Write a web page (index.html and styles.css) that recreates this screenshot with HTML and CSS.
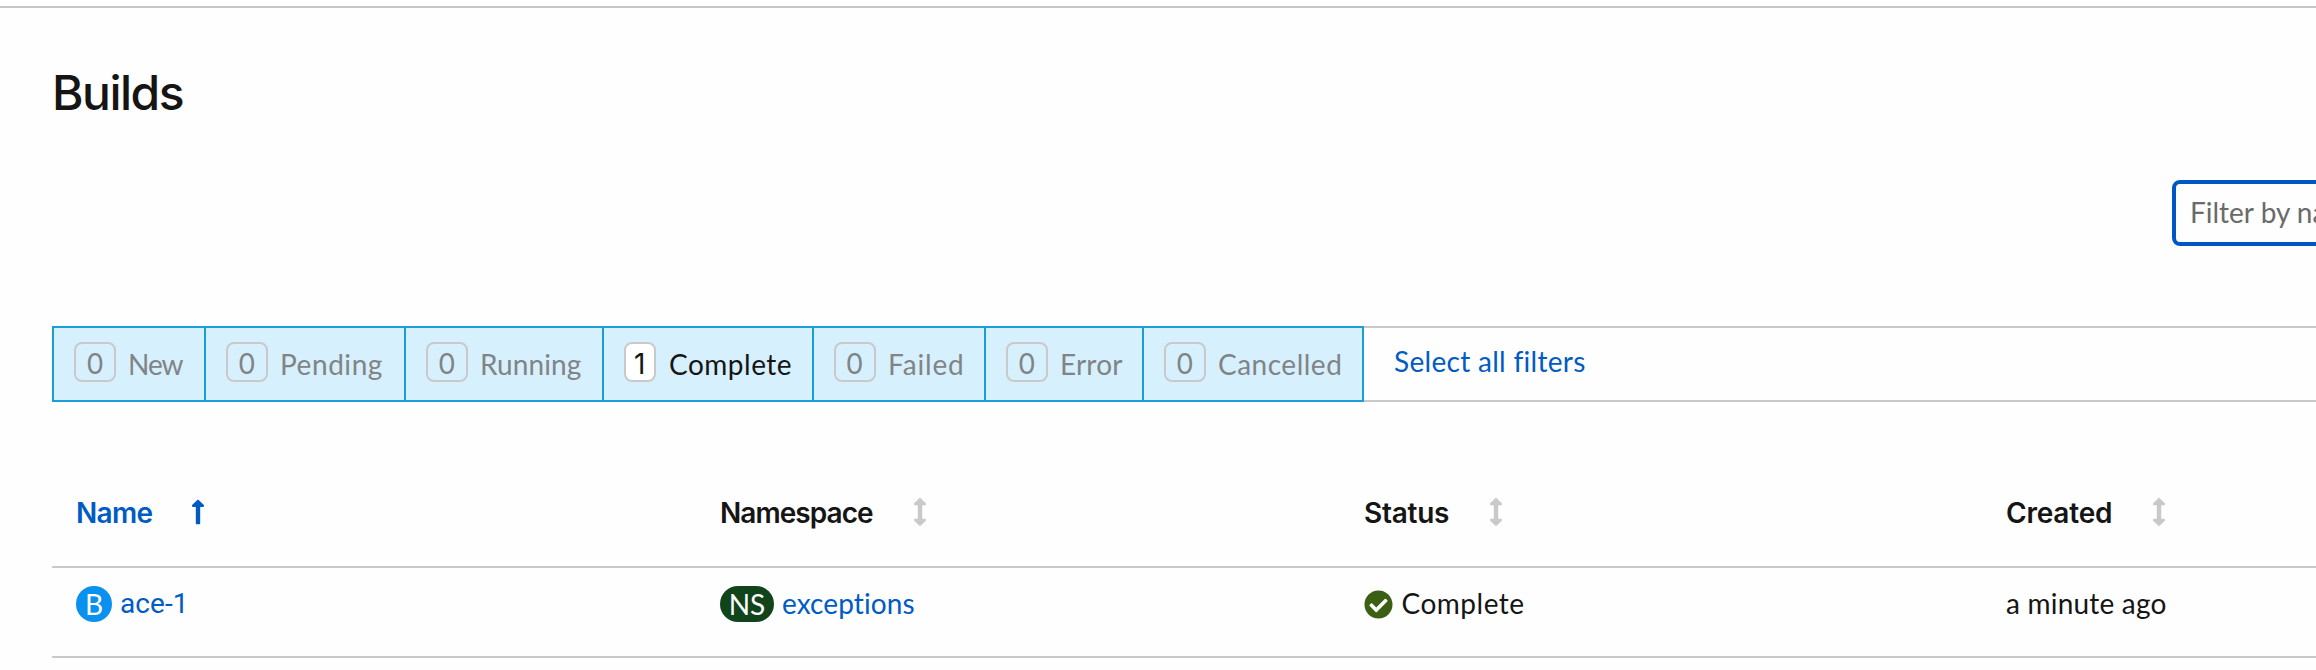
FILE: index.html
```
<!DOCTYPE html>
<html lang="en">
<head>
<meta charset="utf-8">
<title>Builds</title>
<link rel="stylesheet" href="styles.css">
</head>
<body>
<svg class="defs" aria-hidden="true">
  <symbol id="sort-asc" viewBox="0 0 256 512"><path d="M88 166.059V468c0 6.627 5.373 12 12 12h56c6.627 0 12-5.373 12-12V166.059h46.059c21.382 0 32.09-25.851 16.971-40.971l-86.059-86.059c-9.373-9.373-24.569-9.373-33.941 0l-86.059 86.059c-15.119 15.119-4.411 40.971 16.971 40.971H88z"/></symbol>
  <symbol id="sort-both" viewBox="0 0 256 512"><path d="M214.059 377.941H168V134.059h46.059c21.382 0 32.09-25.851 16.971-40.971L144.971 7.029c-9.373-9.373-24.568-9.373-33.941 0L24.971 93.088c-15.119 15.119-4.411 40.971 16.971 40.971H88v243.882H41.941c-21.382 0-32.09 25.851-16.971 40.971l86.059 86.059c9.373 9.373 24.568 9.373 33.941 0l86.059-86.059c15.12-15.119 4.412-40.971-16.97-40.971z"/></symbol>
</svg>
<main class="page">
  <h1 class="title">Builds</h1>
  <div class="toolbar"><div class="filter-input">Filter by name...</div></div>
  <div class="filters">
    <div class="filter filter-new"><span class="count">0</span><span class="label">New</span></div>
    <div class="filter filter-pending"><span class="count">0</span><span class="label">Pending</span></div>
    <div class="filter filter-running"><span class="count">0</span><span class="label">Running</span></div>
    <div class="filter filter-complete active"><span class="count">1</span><span class="label">Complete</span></div>
    <div class="filter filter-failed"><span class="count">0</span><span class="label">Failed</span></div>
    <div class="filter filter-error"><span class="count">0</span><span class="label">Error</span></div>
    <div class="filter filter-cancelled"><span class="count">0</span><span class="label">Cancelled</span></div>
    <a class="select-all">Select all filters</a>
  </div>
  <div class="table">
    <div class="row head">
      <div class="th sorted"><span class="th-name">Name</span><svg class="sort"><use href="#sort-asc"/></svg></div>
      <div class="th"><span class="th-namespace">Namespace</span><svg class="sort"><use href="#sort-both"/></svg></div>
      <div class="th"><span class="th-status">Status</span><svg class="sort"><use href="#sort-both"/></svg></div>
      <div class="th"><span class="th-created">Created</span><svg class="sort"><use href="#sort-both"/></svg></div>
    </div>
    <div class="row body-row">
      <div class="td"><span class="badge badge-build">B</span><a class="link build-name">ace-1</a></div>
      <div class="td"><span class="badge badge-ns">NS</span><a class="link">exceptions</a></div>
      <div class="td"><svg class="check" viewBox="0 0 512 512"><path d="M504 256c0 136.967-111.033 248-248 248S8 392.967 8 256 119.033 8 256 8s248 111.033 248 248zM227.314 387.314l184-184c6.248-6.248 6.248-16.379 0-22.627l-22.627-22.627c-6.248-6.249-16.379-6.249-22.628 0L216 308.118l-70.059-70.059c-6.248-6.248-16.379-6.248-22.628 0l-22.627 22.627c-6.248 6.248-6.248 16.379 0 22.627l104 104c6.249 6.249 16.379 6.249 22.628.001z"/></svg><span class="status">Complete</span></div>
      <div class="td"><span class="age">a minute ago</span></div>
    </div>
  </div>
</main>
</body>
</html>
```
FILE: styles.css
```
* { box-sizing: border-box; }
html { overflow: hidden; }
body {
  margin: 0;
  height: 670px;
  overflow: hidden;
  background: #fefefe;
  color: #151515;
  font-family: Lato, sans-serif;
  font-size: 28px;
  line-height: 42px;
  white-space: nowrap;
}
.defs { display: none; }
.page { margin-top: 6px; border-top: 2px solid #c7c7c7; padding: 54px 0 0 52px; }
.title {
  margin: 0;
  font: 500 48px/62px Inter, sans-serif;
  letter-spacing: -1.5px;
}
.toolbar { display: flex; justify-content: flex-end; padding-top: 56px; overflow: hidden; }
.filter-input {
  flex: none;
  width: 420px;
  height: 66px;
  margin-right: -276px;
  padding: 7px 14px;
  border: 4px solid #0056c4;
  border-radius: 8px;
  color: #6a6a6a;
}
.filters {
  display: flex;
  height: 76px;
  margin-top: 80px;
  border: solid #c9c9c9;
  border-width: 2px 0;
}
.filter {
  display: flex;
  flex: none;
  align-items: flex-start;
  gap: 12px;
  height: 76px;
  margin-top: -2px;
  padding: 14px 0 0 20px;
  border: 2px solid #1b9ed8;
  border-right: 0;
  background: #d7f0fe;
  color: #808486;
}
.count {
  height: 40px;
  width: 42px;
  padding-top: 4px;
  border: 2px solid #c9c9c9;
  border-radius: 8px;
  font-family: Inter, sans-serif;
  line-height: 33px;
  text-align: center;
}
.label { padding-top: 4px; line-height: 36px; }
.active { color: #151515; }
.active .count { width: 32px; background: #fff; }
.filter-new { width: 152px; }
.filter-new .label { letter-spacing: -1px; }
.filter-pending { width: 200px; letter-spacing: .55px; }
.filter-running { width: 198px; letter-spacing: .1px; }
.filter-complete { width: 210px; letter-spacing: .5px; }
.filter-complete .label { padding-left: 1px; }
.filter-failed { width: 172px; letter-spacing: .85px; }
.filter-error { width: 158px; letter-spacing: .2px; }
.filter-cancelled { width: 222px; letter-spacing: .5px; border-right: 2px solid #1b9ed8; }
.select-all { padding: 12px 0 0 30px; color: #005bc5; letter-spacing: .3px; }
.table { padding-top: 64px; }
.row { display: grid; grid-template-columns: 644px 644px 642px 1fr; border-bottom: 2px solid #c9c9c9; }
.head { height: 102px; padding-top: 26px; }
.th { display: flex; align-items: flex-start; gap: 40px; padding-left: 24px; font-family: Inter, sans-serif; font-weight: 600; }
.sorted { color: #005bc5; gap: 39px; }
.sorted .sort { fill: #005bc5; }
.th-name { letter-spacing: -.7px; }
.th-namespace { letter-spacing: -.95px; }
.th-status { letter-spacing: -.25px; }
.th-created { letter-spacing: -.2px; }
.sort { width: 14px; height: 28px; margin-top: 6px; fill: #c9c9c9; }
.body-row { height: 90px; padding-top: 14px; }
.td { display: flex; align-items: flex-start; padding-left: 24px; }
.badge {
  height: 36px;
  margin: 4px 8px 0 0;
  border-radius: 18px;
  color: #fff;
  line-height: 36px;
  text-align: center;
}
.badge-build { width: 36px; background: #0a90ee; }
.badge-ns { width: 54px; background: #12441c; }
.link { color: #005bc5; letter-spacing: .1px; }
.build-name { padding-top: 1px; font-family: Roboto, sans-serif; }
.check { width: 29px; height: 29px; margin: 7.5px 9px 0 -.5px; fill: #3b6014; }
.status { letter-spacing: .5px; }
.age { letter-spacing: .2px; }
```
